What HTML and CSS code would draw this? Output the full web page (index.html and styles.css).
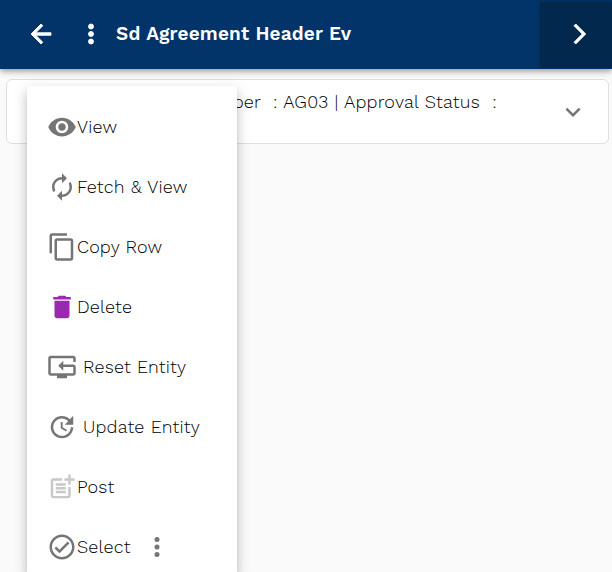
FILE: index.html
```html
<!DOCTYPE html>
<html lang="en">
<head>
<meta charset="utf-8">
<title>Sd Agreement Header Ev</title>
<link rel="stylesheet" href="styles.css">
</head>
<body>
<header class="bar">
  <svg class="icon back" viewBox="0 0 24 24"><path d="M20 11H7.83l5.59-5.59L12 4l-8 8 8 8 1.41-1.41L7.83 13H20v-2z"/></svg>
  <svg class="icon kebab" viewBox="0 0 24 24"><circle cx="12" cy="6" r="2"/><circle cx="12" cy="12" r="2"/><circle cx="12" cy="18" r="2"/></svg>
  <h1 class="title">Sd Agreement Header Ev</h1>
  <button class="next" aria-label="Next"><svg class="icon" viewBox="0 0 24 24"><path d="M8 5.41 14.58 12 8 18.59 9.41 20l8-8-8-8z"/></svg></button>
</header>
<main class="content">
  <section class="card">
    <p class="summary">Agreement Number &nbsp;: AG03 | Approval Status &nbsp;:</p>
    <svg class="icon expand" viewBox="0 0 24 24"><path d="M16.59 8.59 12 13.17 7.41 8.59 6 10l6 6 6-6z"/></svg>
  </section>
</main>
<ul class="menu">
  <li class="item view"><svg class="icon" viewBox="0 0 24 24"><path d="M12 4.5C7 4.5 2.73 7.61 1 12c1.73 4.39 6 7.5 11 7.5s9.27-3.11 11-7.5c-1.73-4.39-6-7.5-11-7.5zM12 17c-2.76 0-5-2.24-5-5s2.24-5 5-5 5 2.24 5 5-2.24 5-5 5zm0-8c-1.66 0-3 1.34-3 3s1.34 3 3 3 3-1.34 3-3-1.34-3-3-3z"/></svg><span class="label">View</span></li>
  <li class="item fetch"><svg class="icon" viewBox="0 0 24 24"><path d="M12 6v3l4-4-4-4v3c-4.42 0-8 3.58-8 8 0 1.57.46 3.03 1.24 4.26L6.7 14.8c-.45-.83-.7-1.79-.7-2.8 0-3.31 2.69-6 6-6zm6.76 1.74L17.3 9.2c.44.84.7 1.79.7 2.8 0 3.31-2.69 6-6 6v-3l-4 4 4 4v-3c4.42 0 8-3.58 8-8 0-1.57-.46-3.03-1.24-4.26z"/></svg><span class="label">Fetch &amp; View</span></li>
  <li class="item copy"><svg class="icon" viewBox="0 0 24 24"><path d="M16 1H4c-1.1 0-2 .9-2 2v14h2V3h12V1zm3 4H8c-1.1 0-2 .9-2 2v14c0 1.1.9 2 2 2h11c1.1 0 2-.9 2-2V7c0-1.1-.9-2-2-2zm0 16H8V7h11v14z"/></svg><span class="label">Copy Row</span></li>
  <li class="item delete"><svg class="icon accent" viewBox="0 0 24 24"><path d="M6 19c0 1.1.9 2 2 2h8c1.1 0 2-.9 2-2V7H6v12zM19 4h-3.5l-1-1h-5l-1 1H5v2h14V4z"/></svg><span class="label">Delete</span></li>
  <li class="item reset"><svg class="icon" viewBox="0 0 24 24"><path d="M21 8h2V5c0-1.100-.9-2-2-2H3C1.900 3 1 3.900 1 5v12c0 1.100.9 2 2 2h5v2h8v-2h5c1.100 0 2-.9 2-2v-5c0-1.100-.9-2-2-2h-8V7l-4 4 4 4v-3h8v5H3V5h18v3z"/></svg><span class="label spaced">Reset Entity</span></li>
  <li class="item update"><svg class="icon" viewBox="0 0 24 24"><path d="M21 10.120h-6.780l2.740-2.820c-2.730-2.700-7.150-2.800-9.880-.1-2.730 2.710-2.730 7.080 0 9.790s7.150 2.710 9.880 0C18.320 15.650 19 14.080 19 12.100h2c0 1.980-.88 4.550-2.640 6.290-3.510 3.480-9.210 3.480-12.720 0-3.500-3.470-3.530-9.110-.02-12.580s9.140-3.470 12.650 0L21 3v7.120zM12.500 8v4.250l3.500 2.080-.72 1.210L11 13V8h1.500z"/></svg><span class="label spaced">Update Entity</span></li>
  <li class="item post"><svg class="icon faded" viewBox="0 0 24 24"><path d="M17 19.220H5V7h7V5H5c-1.100 0-2 .9-2 2v12c0 1.100.9 2 2 2h12c1.100 0 2-.9 2-2v-7h-2v7.220z"/><path d="M19 2h-2v3h-3v2h3v2.990h2V7h3V5h-3V2zM7 9h8v2H7zm0 3v2h8v-2H7zm0 3h8v2H7z"/></svg><span class="label">Post</span></li>
  <li class="item select"><svg class="icon" viewBox="0 0 24 24"><path d="M12 2C6.480 2 2 6.480 2 12s4.480 10 10 10 10-4.480 10-10S17.520 2 12 2zm0 18c-4.410 0-8-3.590-8-8s3.590-8 8-8 8 3.590 8 8-3.590 8-8 8zm4.590-12.420L10 14.170l-2.590-2.580L6 13l4 4 8-8z"/></svg><span class="label">Select</span><svg class="icon more" viewBox="0 0 24 24"><circle cx="12" cy="6" r="2"/><circle cx="12" cy="12" r="2"/><circle cx="12" cy="18" r="2"/></svg></li>
</ul>
</body>
</html>
```
FILE: styles.css
```css
* { box-sizing: border-box; }

body {
  margin: 0;
  height: 572px;
  overflow: hidden;
  position: relative;
  background: #fafafa;
  color: #000;
  font-family: "Work Sans", Inter, sans-serif;
}

.icon {
  width: 30px;
  height: 30px;
  flex: none;
  display: block;
  fill: #757575;
}

.bar {
  position: relative;
  display: flex;
  align-items: center;
  height: 69px;
  padding: 0 0 1px 26px;
  background: #033469;
  box-shadow: 0 2px 4px -1px rgba(0,0,0,.2), 0 4px 5px rgba(0,0,0,.14), 0 1px 10px rgba(0,0,0,.12);
}

.bar .icon { fill: #fff; stroke: #fff; stroke-width: .7; }
.bar .kebab { margin-left: 20px; }

.title {
  margin: 0 0 0 10px;
  font-size: 19px;
  line-height: 24px;
  font-weight: 600;
  letter-spacing: .14px;
  word-spacing: .3px;
  color: #fff;
  white-space: nowrap;
}

.next {
  margin: 3px 0 0 auto;
  width: 72px;
  height: 67px;
  padding: 0 0 4px 23.500px;
  border: 0;
  background: #03284e;
  box-shadow: 0 0 3px #03284e;
  clip-path: inset(-3px 0 1px -3px);
}

.content { padding: 10px 3px 0 6px; }

.card {
  display: flex;
  align-items: center;
  height: 65px;
  padding: 0 20px 0 28px;
  border: 1px solid #e0e0e0;
  border-radius: 6px;
  background: #fff;
}

.summary {
  flex: 1;
  align-self: flex-start;
  margin: 10px 0 0;
  text-align: right;
  padding-right: 61px;
  font-size: 18px;
  font-weight: 360;
  line-height: 24px;
  letter-spacing: .22px;
  word-spacing: .3px;
  white-space: nowrap;
}

.menu {
  position: absolute;
  left: 27px;
  top: 86px;
  width: 210px;
  height: 486px;
  margin: 0;
  padding: 11px 20px 0;
  list-style: none;
  background: #fff;
  border-radius: 4px 4px 0 0;
  box-shadow: 0 5px 5px -3px rgba(0,0,0,.2), 0 8px 10px 1px rgba(0,0,0,.12), 0 3px 14px 2px rgba(0,0,0,.1);
}

.item { display: flex; align-items: center; height: 60px; }
.select { height: 55px; padding-top: 5px; }

.label {
  font-size: 18px;
  font-weight: 360;
  line-height: 24px;
  letter-spacing: .18px;
  word-spacing: .3px;
  white-space: nowrap;
}

.spaced { padding-left: 6px; }
.accent { fill: #9c27b0; }
.faded { fill: #c8c8c8; }
.more { margin-left: 11px; }
```
